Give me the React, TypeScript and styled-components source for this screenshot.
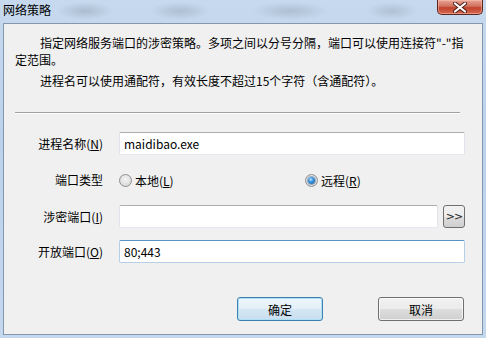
import React from 'react';
import styled, { createGlobalStyle, css } from 'styled-components';

const GlobalStyle = createGlobalStyle`
  html, body {
    margin: 0;
    padding: 0;
    overflow: hidden;
  }
  body {
    font-family: "Noto Sans CJK SC", "Noto Sans", sans-serif;
    font-size: 12px;
    color: #000;
  }
`;

const Window = styled.div`
  width: 486px;
  height: 338px;
  display: flex;
  flex-direction: column;
  background:
    radial-gradient(ellipse 28px 9px at 85px 11px, rgba(150, 165, 182, 0.55), transparent),
    radial-gradient(ellipse 30px 9px at 180px 11px, rgba(150, 165, 182, 0.5), transparent),
    radial-gradient(ellipse 38px 9px at 290px 11px, rgba(150, 165, 182, 0.5), transparent),
    radial-gradient(ellipse 26px 9px at 392px 11px, rgba(150, 165, 182, 0.45), transparent),
    linear-gradient(to bottom, #c6d9ee 0%, #bcd2ec 40%, #c4d8ee 100%);
`;

const TitleBar = styled.div`
  height: 23px;
  display: flex;
  justify-content: space-between;
  align-items: flex-start;
`;

const Title = styled.div`
  padding: 2px 0 0 3px;
  line-height: 16px;
  font-size: 12px;
  color: #000;
`;

const CloseButton = styled.div`
  width: 46px;
  height: 15px;
  margin-right: 3px;
  box-sizing: border-box;
  border: 1px solid #5a2620;
  border-top: none;
  border-radius: 0 0 5px 5px;
  background: linear-gradient(to bottom, #e8a493 0%, #d1705d 45%, #c1412c 55%, #d66a52 100%);
  box-shadow: inset 0 0 0 1px rgba(255, 200, 190, 0.5);
  display: flex;
  justify-content: center;
  align-items: center;
`;

const Client = styled.div`
  flex: 1;
  margin: 0 3px 3px 3px;
  background: #f0f0f0;
  border: 1px solid #8497ae;
  display: flex;
  flex-direction: column;
`;

const Intro = styled.div`
  padding: 10px 0 0 11px;
`;

const Para = styled.p`
  margin: 0 0 4px 0;
  line-height: 17px;
  text-indent: 25px;
  white-space: nowrap;
`;

const Separator = styled.div`
  margin: 19px 22px 0 11px;
  border-top: 1px solid #a0a0a0;
  border-bottom: 1px solid #ffffff;
`;

const FormGrid = styled.div`
  margin-top: 18px;
  padding-right: 17px;
  display: grid;
  grid-template-columns: 99px 1fr;
  column-gap: 16px;
  row-gap: 12px;
  align-items: center;
`;

const Label = styled.label`
  text-align: right;
  line-height: 16px;
  white-space: nowrap;
`;

const TextBox = styled.div<{ $focused?: boolean; $grow?: boolean }>`
  height: 23px;
  box-sizing: border-box;
  background: #fff;
  border: 1px solid #e2e3ea;
  border-top-color: #abadb3;
  border-bottom-color: #e3e9ef;
  border-radius: 2px;
  padding: 0 4px;
  display: flex;
  align-items: center;
  font-size: 12px;
  flex: ${(p) => (p.$grow ? 1 : 'initial')};
  ${(p) =>
    p.$focused &&
    css`
      border-color: #b5cfe7;
      border-top-color: #5794bf;
    `}
`;

const InputRow = styled.div`
  display: flex;
  gap: 5px;
  align-items: center;
`;

const SmallButton = styled.div`
  width: 22px;
  height: 23px;
  box-sizing: border-box;
  border: 1px solid #707070;
  border-radius: 3px;
  background: linear-gradient(to bottom, #f2f2f2 0%, #ebebeb 50%, #dddddd 51%, #cfcfcf 100%);
  display: flex;
  justify-content: center;
  align-items: center;
  font-family: "DejaVu Sans", sans-serif;
  font-size: 11px;
  color: #222;
  letter-spacing: -1px;
`;

const RadioGroup = styled.div`
  height: 26px;
  display: flex;
  align-items: center;
`;

const RadioOption = styled.div<{ $width?: number }>`
  display: flex;
  align-items: center;
  gap: 3px;
  width: ${(p) => (p.$width ? `${p.$width}px` : 'auto')};
`;

const RadioCircle = styled.span<{ $checked?: boolean }>`
  width: 13px;
  height: 13px;
  box-sizing: border-box;
  border-radius: 50%;
  border: 1px solid #8f8f8f;
  background: radial-gradient(circle at 50% 40%, #f4f4f4 0%, #dcdcdc 70%, #cfcfcf 100%);
  display: flex;
  justify-content: center;
  align-items: center;
  ${(p) =>
    p.$checked &&
    css`
      &::after {
        content: '';
        width: 7px;
        height: 7px;
        border-radius: 50%;
        background: radial-gradient(circle at 40% 35%, #bfe6ff 0%, #3f9ae0 35%, #16559a 100%);
        box-shadow: 0 0 0 1px rgba(30, 80, 140, 0.4);
      }
    `}
`;

const ButtonRow = styled.div`
  margin-top: 34px;
  padding-right: 18px;
  display: flex;
  justify-content: flex-end;
  gap: 55px;
`;

const Button = styled.div<{ $default?: boolean }>`
  width: 86px;
  height: 24px;
  box-sizing: border-box;
  border: 1px solid #707070;
  border-radius: 3px;
  background: linear-gradient(to bottom, #f2f2f2 0%, #ebebeb 48%, #dddddd 52%, #cfcfcf 100%);
  box-shadow: inset 0 0 0 1px rgba(255, 255, 255, 0.7);
  display: flex;
  justify-content: center;
  align-items: center;
  font-size: 12px;
  ${(p) =>
    p.$default &&
    css`
      border-color: #3c7fb1;
      box-shadow: inset 0 0 0 1px #aee0f6;
      background: linear-gradient(to bottom, #ecf5fb 0%, #e4eff7 48%, #d4e6f3 52%, #c9def0 100%);
    `}
`;

const CloseGlyph = () => (
  <svg width="14" height="11" viewBox="0 0 14 11">
    <path
      d="M2 1.5 L12 9.5 M12 1.5 L2 9.5"
      stroke="#4a1f1a"
      strokeWidth="4"
      strokeLinecap="round"
    />
    <path
      d="M2 1.5 L12 9.5 M12 1.5 L2 9.5"
      stroke="#ffffff"
      strokeWidth="2.2"
      strokeLinecap="round"
    />
  </svg>
);

export default function App() {
  return (
    <>
      <GlobalStyle />
      <Window>
        <TitleBar>
          <Title>网络策略</Title>
          <CloseButton>
            <CloseGlyph />
          </CloseButton>
        </TitleBar>
        <Client>
          <Intro>
            <Para>
              指定网络服务端口的涉密策略。多项之间以分号分隔，端口可以使用连接符"-"指
              <br />
              定范围。
            </Para>
            <Para>进程名可以使用通配符，有效长度不超过15个字符（含通配符）。</Para>
          </Intro>
          <Separator />
          <FormGrid>
            <Label>
              进程名称(<u>N</u>)
            </Label>
            <TextBox>maidibao.exe</TextBox>

            <Label>端口类型</Label>
            <RadioGroup>
              <RadioOption $width={186}>
                <RadioCircle />
                <span>
                  本地(<u>L</u>)
                </span>
              </RadioOption>
              <RadioOption>
                <RadioCircle $checked />
                <span>
                  远程(<u>R</u>)
                </span>
              </RadioOption>
            </RadioGroup>

            <Label>
              涉密端口(<u>I</u>)
            </Label>
            <InputRow>
              <TextBox $grow />
              <SmallButton>&gt;&gt;</SmallButton>
            </InputRow>

            <Label>
              开放端口(<u>O</u>)
            </Label>
            <TextBox $focused>80;443</TextBox>
          </FormGrid>
          <ButtonRow>
            <Button $default>确定</Button>
            <Button>取消</Button>
          </ButtonRow>
        </Client>
      </Window>
    </>
  );
}
